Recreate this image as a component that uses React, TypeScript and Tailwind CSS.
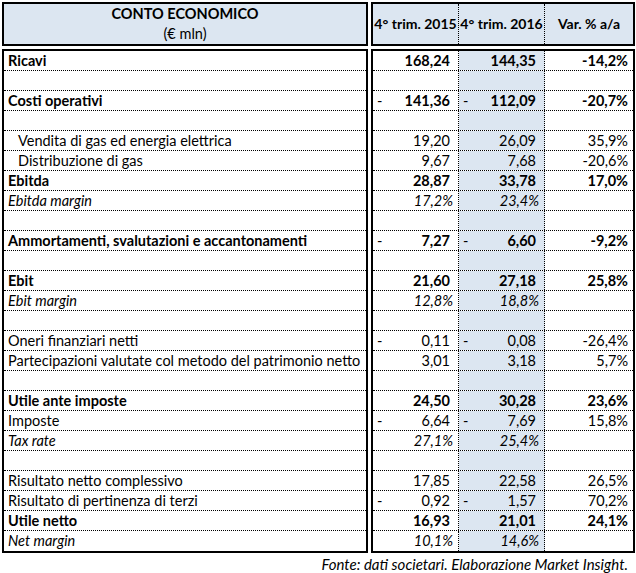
import React from "react";

type Row = {
  label?: string;
  bold?: boolean;
  italic?: boolean;
  indent?: boolean;
  a?: string;
  b?: string;
  c?: string;
  negA?: boolean;
  negB?: boolean;
  pct?: boolean;
};

const rows: Row[] = [
  { label: "Ricavi", bold: true, a: "168,24", b: "144,35", c: "-14,2%" },
  {},
  { label: "Costi operativi", bold: true, a: "141,36", b: "112,09", c: "-20,7%", negA: true, negB: true },
  {},
  { label: "Vendita di gas ed energia elettrica", indent: true, a: "19,20", b: "26,09", c: "35,9%" },
  { label: "Distribuzione di gas", indent: true, a: "9,67", b: "7,68", c: "-20,6%" },
  { label: "Ebitda", bold: true, a: "28,87", b: "33,78", c: "17,0%" },
  { label: "Ebitda margin", italic: true, a: "17,2%", b: "23,4%", pct: true },
  {},
  { label: "Ammortamenti, svalutazioni e accantonamenti", bold: true, a: "7,27", b: "6,60", c: "-9,2%", negA: true, negB: true },
  {},
  { label: "Ebit", bold: true, a: "21,60", b: "27,18", c: "25,8%" },
  { label: "Ebit margin", italic: true, a: "12,8%", b: "18,8%", pct: true },
  {},
  { label: "Oneri finanziari netti", a: "0,11", b: "0,08", c: "-26,4%", negA: true, negB: true },
  { label: "Partecipazioni valutate col metodo del patrimonio netto", a: "3,01", b: "3,18", c: "5,7%" },
  {},
  { label: "Utile ante imposte", bold: true, a: "24,50", b: "30,28", c: "23,6%" },
  { label: "Imposte", a: "6,64", b: "7,69", c: "15,8%", negA: true, negB: true },
  { label: "Tax rate", italic: true, a: "27,1%", b: "25,4%", pct: true },
  {},
  { label: "Risultato netto complessivo", a: "17,85", b: "22,58", c: "26,5%" },
  { label: "Risultato di pertinenza di terzi", a: "0,92", b: "1,57", c: "70,2%", negA: true, negB: true },
  { label: "Utile netto", bold: true, a: "16,93", b: "21,01", c: "24,1%" },
  { label: "Net margin", italic: true, a: "10,1%", b: "14,6%", pct: true },
];

function style(r: Row) {
  return [r.bold ? "font-bold" : "", r.italic ? "italic" : ""].join(" ");
}

function NumCell({ v, neg, pct, r }: { v?: string; neg?: boolean; pct?: boolean; r: Row }) {
  return (
    <div className={`relative flex items-center justify-end h-full pt-[1px] whitespace-nowrap ${pct ? "pr-[5px]" : "pr-[8px]"} ${style(r)}`}>
      {neg && <span className="absolute left-[4px] font-normal not-italic">-</span>}
      {v}
    </div>
  );
}

export default function App() {
  return (
    <div className="w-[636px] h-[573px] bg-white text-black font-['Lato','Noto_Sans',sans-serif] text-[14.5px] leading-none pt-[2px] pl-[2px]">
      {/* Header */}
      <div className="flex gap-[3px]">
        <div className="w-[366px] h-[44px] border-2 border-black bg-[#dce6f1] flex flex-col items-center justify-center gap-[6px]">
          <div className="font-bold">CONTO ECONOMICO</div>
          <div>(€ mln)</div>
        </div>
        <div className="w-[264px] h-[44px] border-2 border-black bg-[#dce6f1] grid grid-cols-[86px_86px_88px] font-bold text-[14px] whitespace-nowrap">
          <div className="flex items-center justify-center border-r border-dotted border-black">4° trim. 2015</div>
          <div className="flex items-center justify-center border-r border-dotted border-black">4° trim. 2016</div>
          <div className="flex items-center justify-center">Var. % a/a</div>
        </div>
      </div>
      {/* Body */}
      <div className="flex gap-[3px] mt-[3px]">
        <div className="w-[366px] border-2 border-black">
          {rows.map((r, i) => (
            <div
              key={i}
              className={`h-[20px] flex items-center pt-[1px] whitespace-nowrap ${r.indent ? "pl-[14px]" : "pl-[4px]"} ${i < rows.length - 1 ? "border-b border-dotted border-black" : ""} ${style(r)}`}
            >
              {r.label}
            </div>
          ))}
        </div>
        <div className="w-[264px] border-2 border-black">
          {rows.map((r, i) => (
            <div
              key={i}
              className={`h-[20px] grid grid-cols-[86px_86px_88px] ${i < rows.length - 1 ? "border-b border-dotted border-black" : ""}`}
            >
              <div className="border-r border-dotted border-black">
                <NumCell v={r.a} neg={r.negA} pct={r.pct} r={r} />
              </div>
              <div className="border-r border-dotted border-black bg-[#dce6f1]">
                <NumCell v={r.b} neg={r.negB} pct={r.pct} r={r} />
              </div>
              <div>
                <NumCell v={r.c} pct r={r} />
              </div>
            </div>
          ))}
        </div>
      </div>
      <div className="flex justify-end pr-[8px] mt-[4px] italic text-[15px]">
        Fonte: dati societari. Elaborazione Market Insight.
      </div>
    </div>
  );
}
